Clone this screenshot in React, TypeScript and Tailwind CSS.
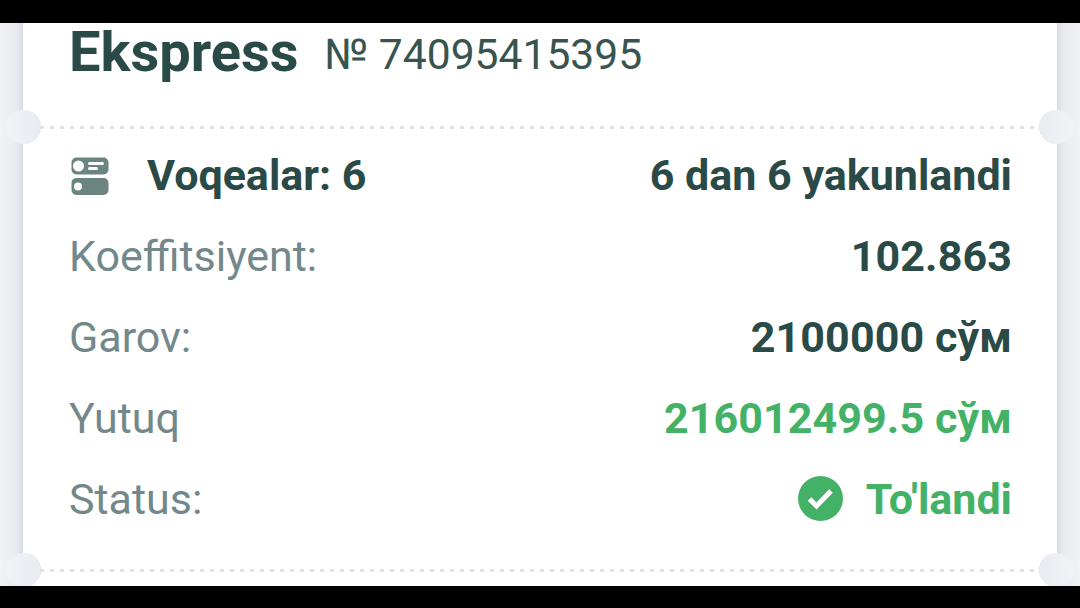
import React from "react";

const Notch = ({ side, y }: { side: "left" | "right"; y: "top" | "bottom" }) => (
  <div
    className={`absolute w-[34px] h-[34px] rounded-full ${
      side === "left"
        ? "left-[-17px] bg-gradient-to-r from-[#f0f2f6] to-[#e8ebf0] shadow-[1px_0px_1px_#dde0e6]"
        : "right-[-17px] bg-gradient-to-l from-[#f0f2f6] to-[#e8ebf0] shadow-[-1px_0px_1px_#dde0e6]"
    } ${y === "top" ? "top-[87px]" : "top-[530px]"}`}
  />
);

const Dashes = () => (
  <div className="h-[3px] bg-[repeating-linear-gradient(90deg,#dfe3e6_0px,#dfe3e6_4px,transparent_4px,transparent_10px)]" />
);

const rows = [
  { label: "Koeffitsiyent:", value: "102.863", green: false },
  { label: "Garov:", value: "2100000 сўм", green: false },
  { label: "Yutuq", value: "216012499.5 сўм", green: true },
];

const App: React.FC = () => {
  return (
    <div className="w-[1080px] h-[608px] bg-black overflow-hidden font-['Roboto',sans-serif] pt-[23px]">
      <div className="h-[563px] flex overflow-hidden">
        <div className="w-[23px] shrink-0 bg-gradient-to-r from-[#f0f2f6] via-[#e9ebf0] via-70% to-[#d9dce3]" />
        <div className="relative flex-1 bg-white pl-[46px] pr-[45px] flex flex-col text-[#2a4a47]">
          {/* Header */}
          <div className="h-[103px] shrink-0 flex items-start gap-[26px]">
            <span className="text-[56px] leading-[58px] font-bold">Ekspress</span>
            <span className="text-[42.6px] leading-[63px] text-[#38544f]">№ 74095415395</span>
          </div>
          <div className="mx-[-29px] shrink-0">
            <Dashes />
          </div>

          <div className="pt-[6px] flex flex-col">
            {/* Events */}
            <div className="h-[81px] flex items-center justify-between text-[43px] font-bold">
              <div className="flex items-center gap-[38px] pl-[2px]">
                <svg width="38" height="38" viewBox="0 0 38 38" className="shrink-0">
                  <rect x="0.5" y="0.5" width="37" height="17" rx="5" fill="#6b8480" />
                  <rect x="0.5" y="21" width="37" height="17" rx="5" fill="#6b8480" />
                  <circle cx="7.5" cy="9" r="5.5" fill="#fff" />
                  <circle cx="7" cy="29.5" r="4" fill="#fff" />
                  <rect x="17" y="5" width="16" height="3" rx="1.5" fill="#fff" />
                  <rect x="17" y="10" width="10" height="3" rx="1.5" fill="#fff" />
                </svg>
                <span>Voqealar: 6</span>
              </div>
              <span>6 dan 6 yakunlandi</span>
            </div>

            {rows.map((row) => (
              <div key={row.label} className="h-[81px] flex items-center justify-between">
                <span className="text-[43px] text-[#72888a]">{row.label}</span>
                <span className={`text-[43px] font-bold tracking-[0.1px] ${row.green ? "text-[#44b266]" : "text-[#2a4a47]"}`}>{row.value}</span>
              </div>
            ))}

            <div className="h-[81px] flex items-center justify-between">
              <span className="text-[43px] text-[#72888a]">Status:</span>
              <div className="flex items-center gap-[23px] text-[43px] font-bold text-[#44b266]">
                <svg width="45" height="45" viewBox="0 0 45 45" className="shrink-0 mb-[3px]">
                  <circle cx="22.5" cy="22.5" r="22.5" fill="#44b266" />
                  <path d="M11.5 23l7 7 14.5-15" stroke="#fff" strokeWidth="5" fill="none" />
                </svg>
                <span>To'landi</span>
              </div>
            </div>
          </div>

          <div className="absolute left-[17px] right-[17px] top-[546px]">
            <Dashes />
          </div>
          <Notch side="left" y="top" />
          <Notch side="right" y="top" />
          <Notch side="left" y="bottom" />
          <Notch side="right" y="bottom" />
        </div>
        <div className="w-[23px] shrink-0 bg-gradient-to-l from-[#f0f2f6] via-[#e9ebf0] via-70% to-[#d9dce3]" />
      </div>
    </div>
  );
};

export default App;
